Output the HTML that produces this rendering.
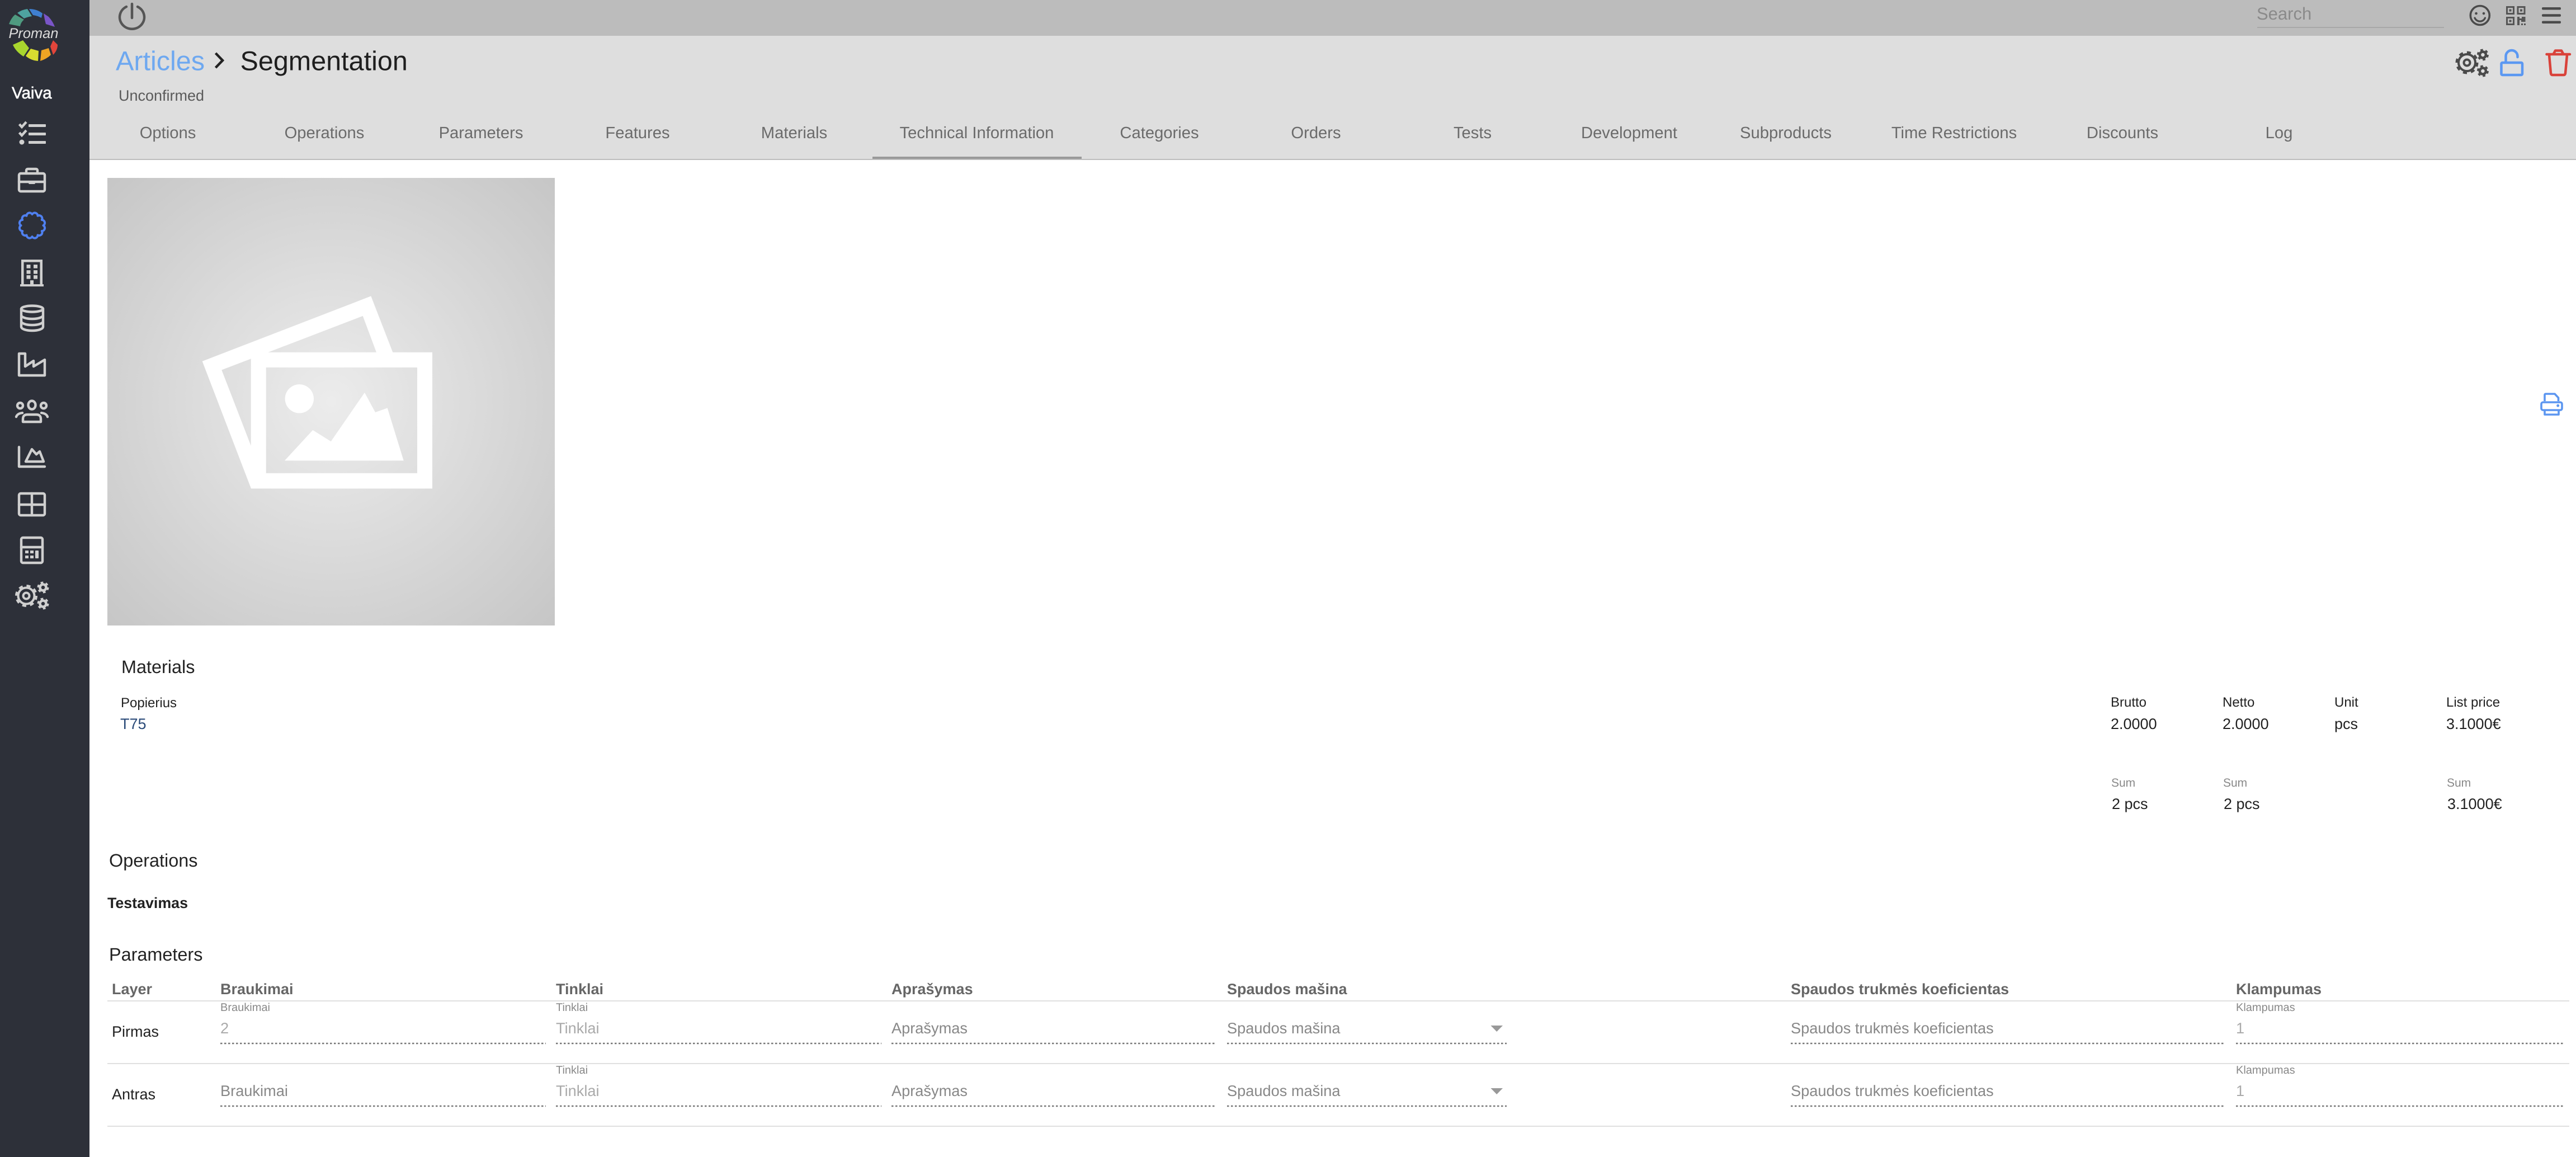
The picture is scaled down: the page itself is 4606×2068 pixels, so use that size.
<!DOCTYPE html>
<html lang="en"><head><meta charset="utf-8"><title>Segmentation</title>
<style>
html,body{margin:0;padding:0;background:#fff;width:4606px;height:2068px;overflow:hidden}
svg{display:block;position:absolute;left:0;top:0}
text{font-family:"Liberation Sans",Arial,sans-serif;text-rendering:geometricPrecision}
.tab{font-size:29.2px;fill:#6b6b6b;text-anchor:middle}
.h{font-size:32.4px;fill:#222}
.s{font-size:24px;fill:#222}
.v{font-size:27px;fill:#222}
.sum{font-size:21px;fill:#888}
.th{font-size:27px;font-weight:700;fill:#666}
.lb{font-size:20px;fill:#888}
.ph{font-size:27.2px;fill:#888}
.dis{font-size:27.2px;fill:#aaa}
.dot{stroke:#777;stroke-width:2.4;stroke-dasharray:3.5 3.5;fill:none}
.rule{fill:#e0e0e0}
.ic{fill:none;stroke:#cfcfcf;stroke-width:4.4;stroke-linecap:round;stroke-linejoin:round}
</style></head>
<body>
<svg width="4606" height="2068" viewBox="0 0 4606 2068" xmlns="http://www.w3.org/2000/svg">
<defs>
<radialGradient id="ph" cx="50%" cy="50%" r="71%"><stop offset="0" stop-color="#ececec"/><stop offset="1" stop-color="#c6c6c6"/></radialGradient>
</defs>
<rect width="4606" height="2068" fill="#fff"/>
<!-- header -->
<rect x="160" y="0" width="4446" height="64" fill="#bcbcbc"/>
<rect x="160" y="64" width="4446" height="220" fill="#dedede"/>
<rect x="160" y="284" width="4446" height="2" fill="#bdbdbd"/>
<rect x="1560" y="280" width="374" height="4" fill="#999"/>

<!-- sidebar -->
<rect x="0" y="0" width="160" height="2068" fill="#2d3039"/>
<!-- logo -->
<path d="M16 43Q20 32 27 26L43 35Q37 40 36 47Z" fill="#4f9a80"/>
<path d="M31 23Q40 17 49 16L57 29Q50 30 43 33Z" fill="#4ea3a0"/>
<path d="M52 16Q66 16 76 24L74 32Q67 28 59 27Z" fill="#3f7fd0"/>
<path d="M78 24L87 30Q95 39 98 48L82 43L80 35Z" fill="#7a55c8"/>
<path d="M95 72L103 80Q103 90 95 98L90 83Z" fill="#e2453b"/>
<path d="M87 86L91 98Q84 105 72 109L74 90Z" fill="#eea424"/>
<path d="M69 91L68 109Q55 108 46 100L55 87Z" fill="#d8dc30"/>
<path d="M41 72L52 86L42 101Q28 92 23 80Z" fill="#a8d62e"/>
<text x="15.5" y="68" font-size="25.4" font-style="italic" fill="#ddd">Proman</text>
<text x="21" y="176" font-size="29.5" fill="#fff" stroke="#fff" stroke-width=".6">Vaiva</text>
<!-- checklist -->
<path d="M34.5 222L39 227L47 218M34.5 237L39 242L47 233" fill="none" stroke="#cfcfcf" stroke-width="4.4"/>
<ellipse cx="39" cy="254" rx="4.5" ry="4.5" fill="#cfcfcf"/>
<rect x="51" y="222" width="31" height="5" rx="1" fill="#cfcfcf"/><rect x="51" y="237" width="31" height="5" rx="1" fill="#cfcfcf"/><rect x="51" y="252" width="31" height="5" rx="1" fill="#cfcfcf"/>
<!-- briefcase -->
<g class="ic"><rect x="34" y="310" width="46" height="32" rx="3"/><path d="M47 310V305Q47 302 50 302H64Q67 302 67 305V310M34 325H80"/></g><rect x="51" y="323" width="12" height="6" rx="2" fill="#cfcfcf"/>
<!-- blue scallop -->
<g transform="translate(57.5 403)"><path fill="none" stroke="#4f80f0" stroke-width="4" stroke-linejoin="round" d="M20 0A5.4 5.4 0 0 1 17.32 10A5.4 5.4 0 0 1 10 17.32A5.4 5.4 0 0 1 0 20A5.4 5.4 0 0 1 -10 17.32A5.4 5.4 0 0 1 -17.32 10A5.4 5.4 0 0 1 -20 0A5.4 5.4 0 0 1 -17.32 -10A5.4 5.4 0 0 1 -10 -17.32A5.4 5.4 0 0 1 0 -20A5.4 5.4 0 0 1 10 -17.32A5.4 5.4 0 0 1 17.32 -10A5.4 5.4 0 0 1 20 0Z"/></g>
<!-- building -->
<g fill="#cfcfcf"><path d="M38 464H76V508H78V512H36V508H38ZM42.5 468.5V508H54V501H60V508H71.5V468.5Z"/><rect x="47.5" y="473" width="7" height="6.5"/><rect x="60" y="473" width="7" height="6.5"/><rect x="47.5" y="483" width="7" height="6.5"/><rect x="60" y="483" width="7" height="6.5"/><rect x="47.5" y="492" width="7" height="6.5"/><rect x="60" y="492" width="7" height="6.5"/></g>
<!-- database -->
<g class="ic" style="stroke-width:4.4"><ellipse cx="57.5" cy="552" rx="19.5" ry="5.5"/><path d="M38 552V584C38 588 46.5 591 57.5 591S77 588 77 584V552M38 563C38 567 46.5 570 57.5 570S77 567 77 563M38 574C38 578 46.5 581 57.5 581S77 578 77 574"/></g>
<!-- factory -->
<path class="ic" d="M34 632H45V655L60 645V655L80 643V671H34Z"/>
<!-- people -->
<g class="ic"><ellipse cx="57" cy="724" rx="6.5" ry="7.5"/><path d="M41 754V749Q41 741 49 741H65Q73 741 73 749V754Z"/><ellipse cx="36" cy="725" rx="5" ry="5"/><ellipse cx="78" cy="725" rx="5" ry="5"/><path d="M29 745Q31 739 40 738M85 745Q83 739 74 738"/></g>
<!-- chart -->
<path class="ic" d="M34 799V834H80"/>
<path class="ic" d="M46 825L57 803L65 812L71 807L78 825Z"/>
<!-- table -->
<g class="ic"><rect x="34" y="882" width="46" height="39" rx="3"/><path d="M34 902H80M57 882V921"/></g>
<!-- calculator -->
<g class="ic"><rect x="38" y="961" width="38" height="45" rx="3"/><path d="M38 978H76"/></g>
<g fill="#cfcfcf"><rect x="45" y="984" width="6" height="5"/><rect x="54" y="984" width="6" height="5"/><rect x="45" y="993" width="6" height="5"/><rect x="54" y="993" width="6" height="5"/><rect x="63" y="984" width="6" height="14" rx="1"/></g>
<!-- sidebar gears -->
<g fill="none" stroke="#cfcfcf"><circle cx="47" cy="1065" r="14.5" stroke-width="4"/><circle cx="47" cy="1065" r="17.5" stroke-width="5" stroke-dasharray="6.9 6.9"/><circle cx="47" cy="1065" r="5.5" stroke-width="4"/><circle cx="77" cy="1050" r="5.5" stroke-width="4.5"/><circle cx="77" cy="1050" r="8.5" stroke-width="4" stroke-dasharray="4.45 4.45"/><circle cx="77" cy="1079" r="5.5" stroke-width="4.5"/><circle cx="77" cy="1079" r="8.5" stroke-width="4" stroke-dasharray="4.45 4.45"/></g>

<!-- top bar -->
<path d="M226 12A22 21 0 1 0 246 12M236 7V32" fill="none" stroke="#555" stroke-width="4.5" stroke-linecap="round"/>
<text x="4035" y="35" font-size="31" fill="#8a8a8a">Search</text>
<rect x="4036" y="48" width="334" height="2" fill="#a8a8a8"/>
<circle cx="4434.3" cy="27.5" r="17" fill="none" stroke="#4a4a4a" stroke-width="3.6"/>
<circle cx="4427.5" cy="24" r="2.3" fill="#4a4a4a"/><circle cx="4441" cy="24" r="2.3" fill="#4a4a4a"/>
<path d="M4425 32A10 10 0 0 0 4443.5 32" fill="none" stroke="#4a4a4a" stroke-width="3.2" stroke-linecap="round"/>
<g fill="none" stroke="#555" stroke-width="3"><rect x="4482.5" y="12.5" width="12" height="12"/><rect x="4502" y="12.5" width="12" height="12"/><rect x="4482.5" y="31.5" width="12" height="12"/></g>
<g fill="#555"><rect x="4486.5" y="16.5" width="4" height="4"/><rect x="4506" y="16.5" width="4" height="4"/><rect x="4486.5" y="35.5" width="4" height="4"/><path d="M4501 30H4505V33H4509V30H4515.5V39H4508V36H4505V45H4501Z"/><rect x="4508" y="42" width="3" height="3"/><rect x="4513" y="42" width="3" height="3"/></g>
<g fill="#4a4a4a"><rect x="4545" y="13" width="34" height="4.5" rx="2"/><rect x="4545" y="25.3" width="34" height="4.5" rx="2"/><rect x="4545" y="37.5" width="34" height="4.5" rx="2"/></g>

<!-- title -->
<text x="207" y="125.5" font-size="48.5" fill="#6ea8f0">Articles</text>
<path d="M385.5 95L398 108L385.5 121" fill="none" stroke="#222" stroke-width="4.5"/>
<text x="429.5" y="125.5" font-size="48.5" fill="#1e1e1e">Segmentation</text>
<text x="212" y="180" font-size="27" fill="#5a5a5a">Unconfirmed</text>

<!-- top-right actions -->
<g fill="none" stroke="#4a4a4a"><circle cx="4411" cy="112" r="15" stroke-width="4"/><circle cx="4411" cy="112" r="18" stroke-width="5" stroke-dasharray="7 7.1"/><circle cx="4411" cy="112" r="5.5" stroke-width="4"/><circle cx="4439.4" cy="98" r="5.5" stroke-width="4.5"/><circle cx="4439.4" cy="98" r="8.5" stroke-width="4" stroke-dasharray="4.45 4.45"/><circle cx="4439.4" cy="127" r="5.5" stroke-width="4.5"/><circle cx="4439.4" cy="127" r="8.5" stroke-width="4" stroke-dasharray="4.45 4.45"/></g>
<g fill="none" stroke="#5b98f2" stroke-width="4.5" stroke-linecap="round"><rect x="4472.5" y="112" width="37.5" height="22" rx="2"/><path d="M4480.5 110V100.5A10.5 10.5 0 0 1 4501.5 100.5V102"/></g>
<g fill="none" stroke="#d9423a" stroke-width="4.5" stroke-linecap="round" stroke-linejoin="round"><path d="M4553.5 97H4595"/><path d="M4558 98L4561 131Q4561.5 134 4564 134H4584Q4586.5 134 4587 131L4590 98"/><path d="M4566 96L4569 90.5H4580L4583 96"/></g>

<!-- tabs -->
<text class="tab" x="300" y="247">Options</text>
<text class="tab" x="580" y="247">Operations</text>
<text class="tab" x="860" y="247">Parameters</text>
<text class="tab" x="1140" y="247">Features</text>
<text class="tab" x="1420" y="247">Materials</text>
<text class="tab" x="1746.5" y="247">Technical Information</text>
<text class="tab" x="2073" y="247">Categories</text>
<text class="tab" x="2353" y="247">Orders</text>
<text class="tab" x="2633" y="247">Tests</text>
<text class="tab" x="2913" y="247">Development</text>
<text class="tab" x="3193" y="247">Subproducts</text>
<text class="tab" x="3494" y="247">Time Restrictions</text>
<text class="tab" x="3795" y="247">Discounts</text>
<text class="tab" x="4075" y="247">Log</text>

<!-- placeholder image -->
<rect x="192" y="318" width="800" height="800" fill="url(#ph)"/>
<path fill="#fff" fill-rule="evenodd" d="M361.7 645.7L663.3 529.3L702.3 629.7H773V873.3H449ZM475.7 656.7V845.7H746V656.7ZM479.3 629.7H673L648.7 564.7ZM396.3 661.3L448.7 796.7V641.3Z"/>
<circle cx="535.3" cy="712.7" r="25.7" fill="#fff"/>
<path fill="#fff" d="M509 823.3L559.3 768.7L591.7 789L652 701.7L671 737L692.7 729.3L721.7 823.3Z"/>

<!-- printer -->
<g fill="none" stroke="#5c96f0" stroke-width="3.6" stroke-linejoin="round"><path d="M4550 717V706Q4550 704 4552 704H4568L4574.5 711V717"/><rect x="4544" y="719" width="37" height="14" rx="3"/><path d="M4550 733V741H4575V733"/></g>
<circle cx="4573.7" cy="725" r="2.5" fill="#5c96f0"/>

<!-- materials -->
<text class="h" x="217" y="1203">Materials</text>
<text class="s" x="216" y="1264">Popierius</text>
<text class="v" x="215" y="1303" style="fill:#2a4a78">T75</text>
<text class="s" x="3774" y="1263">Brutto</text><text class="s" x="3974" y="1263">Netto</text><text class="s" x="4174" y="1263">Unit</text><text class="s" x="4374" y="1263">List price</text>
<text class="v" x="3774" y="1303">2.0000</text><text class="v" x="3974" y="1303">2.0000</text><text class="v" x="4174" y="1303">pcs</text><text class="v" x="4374" y="1303">3.1000€</text>
<text class="sum" x="3775" y="1406">Sum</text><text class="sum" x="3975" y="1406">Sum</text><text class="sum" x="4375" y="1406">Sum</text>
<text class="v" x="3776" y="1446">2 pcs</text><text class="v" x="3976" y="1446">2 pcs</text><text class="v" x="4376" y="1446">3.1000€</text>

<!-- operations -->
<text class="h" x="195" y="1549">Operations</text>
<text x="192" y="1623" font-size="26.8" font-weight="700" fill="#222">Testavimas</text>

<!-- parameters -->
<text class="h" x="195" y="1717">Parameters</text>
<text class="th" x="200" y="1777">Layer</text>
<text class="th" x="394" y="1777">Braukimai</text>
<text class="th" x="994" y="1777">Tinklai</text>
<text class="th" x="1594" y="1777">Aprašymas</text>
<text class="th" x="2194" y="1777">Spaudos mašina</text>
<text class="th" x="3202" y="1777">Spaudos trukmės koeficientas</text>
<text class="th" x="3998" y="1777">Klampumas</text>
<rect class="rule" x="192" y="1788" width="4402" height="2"/>
<rect class="rule" x="192" y="1900" width="4402" height="2"/>
<rect class="rule" x="192" y="2012" width="4402" height="2"/>

<text class="v" x="200" y="1853">Pirmas</text>
<text class="v" x="200" y="1965">Antras</text>

<text class="lb" x="394" y="1807">Braukimai</text><text class="lb" x="994" y="1807">Tinklai</text><text class="lb" x="3998" y="1807">Klampumas</text>
<text class="lb" x="994" y="1919">Tinklai</text><text class="lb" x="3998" y="1919">Klampumas</text>

<text class="dis" x="394" y="1847">2</text><text class="dis" x="994" y="1847">Tinklai</text><text class="ph" x="1594" y="1847">Aprašymas</text><text class="ph" x="2194" y="1847">Spaudos mašina</text><text class="ph" x="3202" y="1847">Spaudos trukmės koeficientas</text><text class="dis" x="3998" y="1847">1</text>
<text class="ph" x="394" y="1959">Braukimai</text><text class="dis" x="994" y="1959">Tinklai</text><text class="ph" x="1594" y="1959">Aprašymas</text><text class="ph" x="2194" y="1959">Spaudos mašina</text><text class="ph" x="3202" y="1959">Spaudos trukmės koeficientas</text><text class="dis" x="3998" y="1959">1</text>

<path fill="#999" d="M2665.5 1833H2687L2676.2 1844ZM2665.5 1945H2687L2676.2 1956Z"/>

<g class="dot"><path d="M394 1865H976M994 1865H1576M1594 1865H2175M2194 1865H2694M3202 1865H3978M3998 1865H4585"/><path d="M394 1977H976M994 1977H1576M1594 1977H2175M2194 1977H2694M3202 1977H3978M3998 1977H4585"/></g>
</svg>
</body></html>
